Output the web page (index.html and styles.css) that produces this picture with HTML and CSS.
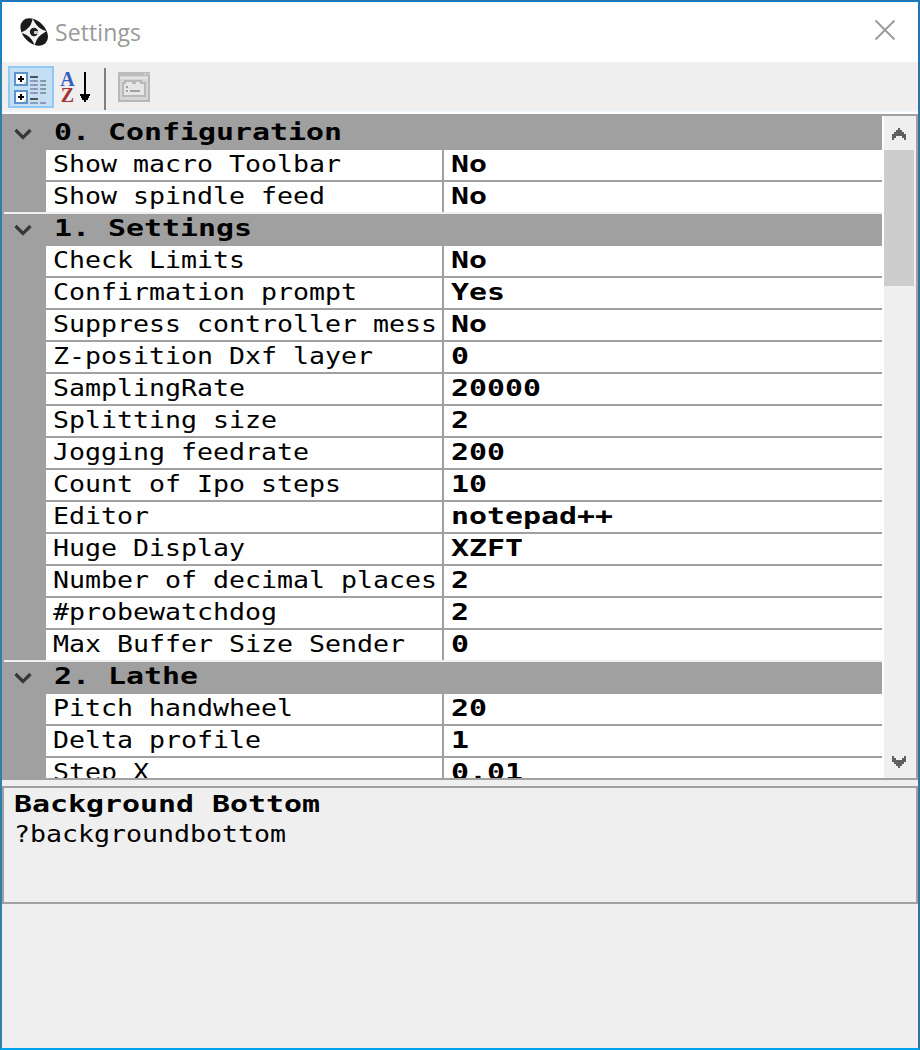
FILE: index.html
```html
<!DOCTYPE html>
<html lang="en">
<head>
<meta charset="utf-8">
<title>Settings</title>
<link rel="stylesheet" href="styles.css">
</head>
<body>
<div class="window">
  <header class="titlebar">
    <svg class="logo" width="30" height="30" viewBox="0 0 30 30">
      <ellipse cx="15.2" cy="15" rx="16" ry="11" transform="rotate(45 15.2 15)" fill="#1a1a1a"/>
      <path d="M14 4.500 Q18 12 25 14.500 Q18 18 15.500 25.500 Q12 18 4.500 15.500 Q12 12 14 4.500Z" fill="#f4f4f4" stroke="#f4f4f4" stroke-width="2"/>
      <circle cx="15" cy="15" r="4.200" fill="#222"/>
      <path d="M15 14h4v3h-4z" fill="#ccc"/>
    </svg>
    <span class="title">Settings</span>
    <svg class="close" width="22" height="22" viewBox="0 0 22 22"><path d="M1.5 1.5 20.5 20.5M20.5 1.5 1.5 20.5" stroke="#999" stroke-width="1.8"/></svg>
  </header>
  <div class="toolbar">
    <div class="tool active">
      <svg width="34" height="34" viewBox="0 0 34 34" shape-rendering="crispEdges">
        <g fill="#fff" stroke="#5b93cd" stroke-width="2"><rect x="1" y="3" width="12" height="12"/><rect x="1" y="21" width="12" height="12"/></g>
        <path d="M10 12h2v2h-2zM10 30h2v2h-2z" fill="#ddd7a0"/>
        <path d="M4 8h6v2H4zM6 6h2v6H6zM4 26h6v2H4zM6 24h2v6H6z" fill="#000"/>
        <path d="M16 6h8v2h-8zM16 28h8v2h-8z" fill="#505357"/>
        <path d="M16 10h8v2h-8zM16 14h8v2h-8zM16 18h8v2h-8zM16 22h8v2h-8zM16 32h8v2h-8zM26 10h6v2h-6zM26 14h6v2h-6zM26 18h6v2h-6zM26 22h6v2h-6zM26 32h6v2h-6z" fill="#8ba0bc"/>
        <path d="M20 10h2v2h-2zM20 14h2v2h-2zM20 18h2v2h-2zM20 22h2v2h-2zM28 10h2v2h-2zM28 14h2v2h-2zM28 18h2v2h-2zM28 22h2v2h-2zM28 32h2v2h-2z" fill="#9a88ad"/>
        <path d="M30 10h2v2h-2zM30 14h2v2h-2zM30 18h2v2h-2zM30 22h2v2h-2z" fill="#6fa395"/>
      </svg>
    </div>
    <div class="tool sort">
      <div class="letters"><span class="a">A</span><span class="z">Z</span></div>
      <svg width="12" height="32" viewBox="0 0 12 32" shape-rendering="crispEdges"><path d="M5 0h2v22h4v2h-1v2H9v2H7v2H5v-2H3v-2H2v-2H1v-2h4z" fill="#000"/></svg>
    </div>
    <div class="divider"></div>
    <svg class="pages" width="32" height="30" viewBox="0 0 32 30" shape-rendering="crispEdges">
      <rect x="1" y="1" width="30" height="28" fill="#d6d6d6" stroke="#b8b8b8" stroke-width="2"/>
      <path d="M0 0h32v4H0z" fill="#bcbcbc"/><path d="M26 1h2v2h-2zM30 1h1v2h-1z" fill="#d0d0d0"/>
      <path d="M2 5h28v2H2z" fill="#e3e3e3"/>
      <path d="M5 24V11h2V9h8v2h2V9h6v2h4v13z" fill="#e6e6e6" stroke="#b8b8b8" stroke-width="1.5"/>
      <path d="M8 14h2v2H8zM8 18h2v2H8zM12 18h10v2H12z" fill="#a0a0a0"/>
    </svg>
  </div>
  <main class="grid">
    <div class="rows">
      <div class="cat first"><svg class="chev" viewBox="0 0 18 12"><path d="M1.5 2 9 9.5 16.5 2" fill="none" stroke="#383838" stroke-width="3.2"/></svg><b>0. Configuration</b></div>
      <div class="row"><div><span>Show macro Toolbar</span></div><div><b>No</b></div></div>
      <div class="row last"><div><span>Show spindle feed</span></div><div><b>No</b></div></div>
      <div class="cat"><svg class="chev" viewBox="0 0 18 12"><path d="M1.5 2 9 9.5 16.5 2" fill="none" stroke="#383838" stroke-width="3.2"/></svg><b>1. Settings</b></div>
      <div class="row"><div><span>Check Limits</span></div><div><b>No</b></div></div>
      <div class="row"><div><span>Confirmation prompt</span></div><div><b>Yes</b></div></div>
      <div class="row"><div><span>Suppress controller mess</span></div><div><b>No</b></div></div>
      <div class="row"><div><span>Z-position Dxf layer</span></div><div><b>0</b></div></div>
      <div class="row"><div><span>SamplingRate</span></div><div><b>20000</b></div></div>
      <div class="row"><div><span>Splitting size</span></div><div><b>2</b></div></div>
      <div class="row"><div><span>Jogging feedrate</span></div><div><b>200</b></div></div>
      <div class="row"><div><span>Count of Ipo steps</span></div><div><b>10</b></div></div>
      <div class="row"><div><span>Editor</span></div><div><b>notepad++</b></div></div>
      <div class="row"><div><span>Huge Display</span></div><div><b>XZFT</b></div></div>
      <div class="row"><div><span>Number of decimal places</span></div><div><b>2</b></div></div>
      <div class="row"><div><span>#probewatchdog</span></div><div><b>2</b></div></div>
      <div class="row last"><div><span>Max Buffer Size Sender</span></div><div><b>0</b></div></div>
      <div class="cat"><svg class="chev" viewBox="0 0 18 12"><path d="M1.5 2 9 9.5 16.5 2" fill="none" stroke="#383838" stroke-width="3.2"/></svg><b>2. Lathe</b></div>
      <div class="row"><div><span>Pitch handwheel</span></div><div><b>20</b></div></div>
      <div class="row"><div><span>Delta profile</span></div><div><b>1</b></div></div>
      <div class="row"><div><span>Step X</span></div><div><b>0.01</b></div></div>
    </div>
    <div class="scroll">
      <svg class="arrow" viewBox="0 0 14 12" shape-rendering="crispEdges"><path d="M6 0h2v2h2v2h2v2h2v6h-2v-2h-2V8H4v2H2v2H0V6h2V4h2V2h2z" fill="#606060"/></svg>
      <div class="thumb"></div>
      <svg class="arrow down" viewBox="0 0 14 12" shape-rendering="crispEdges"><path d="M0 0h2v2h2v2h6V2h2V0h2v6h-2v2h-2v2H8v2H6v-2H4V8H2V6H0z" fill="#606060"/></svg>
    </div>
  </main>
  <section class="help">
    <b>Background Bottom</b>
    <span>?backgroundbottom</span>
  </section>
</div>
</body>
</html>
```
FILE: styles.css
```css
* { box-sizing: border-box; }
body { margin: 0; background: #efefef; }
.window {
  width: 920px; height: 1050px;
  border: 2px solid #2d75a8; border-left-color: #2b80ad;
  border-bottom-color: #00a2ed;
  background: #efefef;
  display: flex; flex-direction: column;
}
.titlebar {
  height: 60px; background: #fff; display: flex; align-items: center; flex: none;
  padding: 0 22px 0 17px;
  box-shadow: 0 0 0 1px #0b7bd3;
}
.logo { margin-top: -1px; }
.title { font: 23px/30px "Open Sans", "Noto Sans", sans-serif; color: #999; margin: 0 auto 1px 6px; letter-spacing: 0.1px; }
.close { margin-top: -4px; }
.toolbar {
  height: 52px; flex: none; display: flex; align-items: flex-start; position: relative;
  border-bottom: 2px solid #fff; padding: 4px 6px 0;
  background: linear-gradient(#efefef 48px, #f0f5fa 48px);
}
.tool.active { width: 46px; height: 42px; border: 2px solid #90c8f6; background: #c4def4; padding: 2px 4px; }
.sort { display: flex; padding: 6px 0 0 5px; width: 48px; }
.letters { width: 17px; display: flex; flex-direction: column; align-items: center; font: bold 20px/15px "Liberation Serif", serif; }
.letters span { height: 16px; }
.a { color: #315fc0; }
.z { color: #a33636; }
.sort svg { margin-left: 3px; }
.divider { width: 2px; height: 42px; background: #808080; margin: 2px 12px 0 2px; }
.pages { margin-top: 6px; }
.grid {
  height: 666px; flex: none; border: 2px solid #a0a0a0; background: #fff;
  display: flex; overflow: hidden;
}
.rows { width: 878px; height: 662px; overflow: hidden; background: #a0a0a0; flex: none; }
.cat { height: 34px; border-top: 2px solid #efefef; display: flex; padding-left: 10px; }
.cat.first { border-top: 0; }
.cat b { margin-left: 22px; line-height: 28px; }
.cat.first b { line-height: 32px; }
.cat .chev { width: 18px; height: 12px; margin-top: 10px; }
.cat.first .chev { margin-top: 12px; }
.row { height: 32px; margin-left: 42px; display: flex; border-bottom: 2px solid #a0a0a0; background: #fff; }
.row.last { height: 30px; border-bottom: 0; }
.row div { padding-left: 7px; line-height: 28px; white-space: nowrap; overflow: hidden; }
.row div:first-child { width: 398px; flex: none; border-right: 2px solid #a0a0a0; }
.row div:last-child { flex: 1; }
.rows b, .rows span, .help b, .help span {
  display: block; width: max-content; white-space: pre;
  font-family: "DejaVu Sans Mono", monospace; font-size: 23px; color: #000;
  transform: scaleX(1.1556); transform-origin: 0 0;
}
.rows b, .help b { transform: scaleX(1.3); }
.scroll { width: 32px; margin-left: 2px; background: #efefef; display: flex; flex-direction: column; }
.arrow { width: 14px; height: 12px; margin: 12px 0 10px 8px; }
.arrow.down { margin: auto 0 10px 8px; }
.thumb { width: 30px; height: 136px; background: #cdcdcd; }
.help { height: 118px; margin-top: 6px; flex: none; border: 2px solid #a0a0a0; padding: 1px 10px; }
.help b, .help span { line-height: 30px; }
```
